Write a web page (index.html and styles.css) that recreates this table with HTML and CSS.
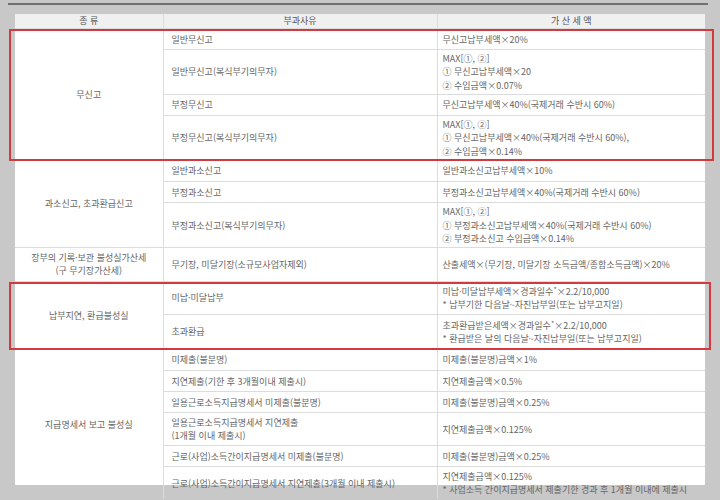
FILE: index.html
```html
<!DOCTYPE html>
<html lang="ko">
<head>
<meta charset="utf-8">
<title>가산세</title>
<link rel="stylesheet" href="styles.css">
</head>
<body>
<div class="page">
  <div class="topbar"><div class="rule"></div></div>
  <div class="sheet">
    <table class="tax">
      <colgroup><col class="c1"><col class="c2"><col class="c3"></colgroup>
      <thead>
        <tr><th>종 류</th><th>부과사유</th><th>가 산 세 액</th></tr>
      </thead>
      <tbody>
        <tr><td rowspan="4" class="cat">무신고</td><td>일반무신고</td><td>무신고납부세액×20%</td></tr>
        <tr class="l3"><td>일반무신고(복식부기의무자)</td><td>MAX[①, ②]<br>① 무신고납부세액×20<br>② 수입금액×0.07%</td></tr>
        <tr><td>부정무신고</td><td>무신고납부세액×40%(국제거래 수반시 60%)</td></tr>
        <tr class="l3"><td>부정무신고(복식부기의무자)</td><td>MAX[①, ②]<br>① 무신고납부세액×40%(국제거래 수반시 60%),<br>② 수입금액×0.14%</td></tr>
        <tr><td rowspan="3" class="cat">과소신고, 초과환급신고</td><td>일반과소신고</td><td>일반과소신고납부세액×10%</td></tr>
        <tr><td>부정과소신고</td><td>부정과소신고납부세액×40%(국제거래 수반시 60%)</td></tr>
        <tr class="l3"><td>부정과소신고(복식부기의무자)</td><td>MAX[①, ②]<br>① 부정과소신고납부세액×40%(국제거래 수반시 60%)<br>② 부정과소신고 수입금액×0.14%</td></tr>
        <tr class="l2b"><td class="cat">장부의 기록·보관 불성실가산세<br>(구 무기장가산세)</td><td>무기장, 미달기장(소규모사업자제외)</td><td>산출세액×(무기장, 미달기장 소득금액/종합소득금액)×20%</td></tr>
        <tr class="l2"><td rowspan="2" class="cat">납부지연, 환급불성실</td><td>미납·미달납부</td><td>미납·미달납부세액×경과일수<sup>*</sup>×2.2/10,000<br>* 납부기한 다음날~자진납부일(또는 납부고지일)</td></tr>
        <tr class="l2c"><td>초과환급</td><td>초과환급받은세액×경과일수<sup>*</sup>×2.2/10,000<br>* 환급받은 날의 다음날~자진납부일(또는 납부고지일)</td></tr>
        <tr><td rowspan="6" class="cat">지급명세서 보고 불성실</td><td>미제출(불분명)</td><td>미제출(불분명)금액×1%</td></tr>
        <tr><td>지연제출(기한 후 3개월이내 제출시)</td><td>지연제출금액×0.5%</td></tr>
        <tr><td>일용근로소득지급명세서 미제출(불분명)</td><td>미제출(불분명)금액×0.25%</td></tr>
        <tr class="l2"><td>일용근로소득지급명세서 지연제출<br>(1개월 이내 제출시)</td><td>지연제출금액×0.125%</td></tr>
        <tr><td>근로(사업)소득간이지급명세서 미제출(불분명)</td><td>미제출(불분명)금액×0.25%</td></tr>
        <tr class="l2"><td>근로(사업)소득간이지급명세서 지연제출(3개월 이내 제출시)</td><td>지연제출금액×0.125%<br>* 사업소득 간이지급명세서 제출기한 경과 후 1개월 이내에 제출시</td></tr>
      </tbody>
    </table>
    <div class="mark mark-a"></div>
    <div class="mark mark-b"></div>
  </div>
</div>
</body>
</html>
```

FILE: styles.css
```css
html, body {
  margin: 0;
  padding: 0;
}
body {
  background: #c8c8c8;
  font-family: "Noto Sans CJK KR", "Noto Sans", sans-serif;
  width: 720px;
  height: 500px;
  overflow: hidden;
}
.topbar {
  height: 14px;
  padding-top: 3px;
  box-sizing: border-box;
}
.rule {
  margin-left: 8px;
  width: 700px;
  height: 2px;
  background: #707070;
}
.sheet {
  position: relative;
  margin-left: 15px;
  width: 690px;
  height: 471px;
  background: #fff;
}
.tax {
  width: 690px;
  table-layout: fixed;
  border-collapse: collapse;
  border-style: hidden;
  font-size: 9px;
  line-height: 13.1px;
  color: #666;
}
.c1 { width: 148px; }
.c2 { width: 274px; }
.c3 { width: 268px; }
.tax th {
  background: #f0f0f0;
  font-weight: normal;
  height: 14px;
  padding: 0;
  line-height: 14px;
  border: 1px solid #dcdcdc;
  color: #555;
}
.tax td {
  border: 1px solid #dcdcdc;
  padding: 3.5px 8px;
  white-space: nowrap;
  vertical-align: middle;
  text-align: left;
}
.tax td:last-child {
  padding-left: 5px;
  padding-right: 2px;
}
.tax td.cat {
  text-align: center;
  padding-left: 0;
  padding-right: 0;
}
.tax .l3 td {
  padding-top: 2.3px;
  padding-bottom: 2.3px;
}
.tax .l2 td {
  padding-top: 2.9px;
  padding-bottom: 2.9px;
}
.tax .l2b td {
  padding-top: 3.4px;
  padding-bottom: 3.4px;
}
.tax .l2c td {
  padding-top: 3.9px;
  padding-bottom: 3.9px;
}
.tax sup {
  font-size: 7px;
  line-height: 0;
  vertical-align: baseline;
  position: relative;
  top: -3px;
}
.mark {
  position: absolute;
  box-sizing: border-box;
  border: 2px solid #d33a3f;
}
.mark-a {
  left: -6px;
  top: 15px;
  width: 705px;
  height: 132px;
}
.mark-b {
  left: -6px;
  top: 268px;
  width: 702px;
  height: 68px;
}
```
